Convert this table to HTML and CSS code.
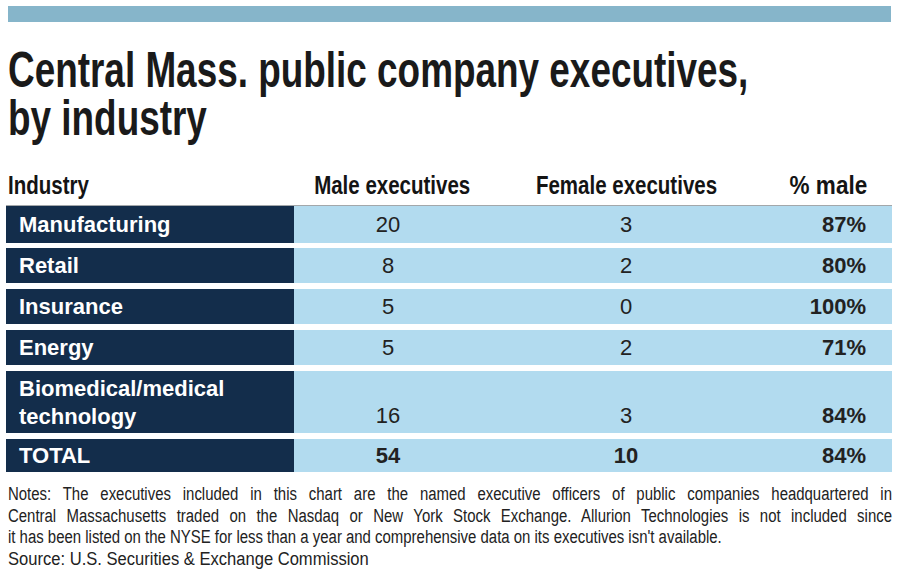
FILE: index.html
```html
<!DOCTYPE html>
<html lang="en">
<head>
<meta charset="utf-8">
<title>Central Mass. public company executives, by industry</title>
<link rel="stylesheet" href="styles.css">
</head>
<body>
<div class="page">
  <div class="topbar"></div>
  <h1 class="title">
    <span class="tline">Central Mass. public company executives,</span>
    <span class="tline">by industry</span>
  </h1>
  <div class="table">
    <div class="head">
      <div class="h-name"><span class="cond">Industry</span></div>
      <div class="h-num"><span class="cond">Male executives</span></div>
      <div class="h-num"><span class="cond">Female executives</span></div>
      <div class="h-pct"><span class="cond">% male</span></div>
    </div>
    <div class="rows">
      <div class="row">
        <div class="name">Manufacturing</div>
        <div class="num">20</div>
        <div class="num">3</div>
        <div class="pct">87%</div>
      </div>
      <div class="row">
        <div class="name">Retail</div>
        <div class="num">8</div>
        <div class="num">2</div>
        <div class="pct">80%</div>
      </div>
      <div class="row">
        <div class="name">Insurance</div>
        <div class="num">5</div>
        <div class="num">0</div>
        <div class="pct">100%</div>
      </div>
      <div class="row">
        <div class="name">Energy</div>
        <div class="num">5</div>
        <div class="num">2</div>
        <div class="pct">71%</div>
      </div>
      <div class="row tall">
        <div class="name">Biomedical/medical<br>technology</div>
        <div class="num">16</div>
        <div class="num">3</div>
        <div class="pct">84%</div>
      </div>
      <div class="row total">
        <div class="name">TOTAL</div>
        <div class="num">54</div>
        <div class="num">10</div>
        <div class="pct">84%</div>
      </div>
    </div>
  </div>
  <div class="notes">
    <p class="line just">Notes: The executives included in this chart are the named executive officers of public companies headquartered in</p>
    <p class="line just">Central Massachusetts traded on the Nasdaq or New York Stock Exchange. Allurion Technologies is not included since</p>
    <p class="line">it has been listed on the NYSE for less than a year and comprehensive data on its executives isn't available.</p>
    <p class="line source">Source: U.S. Securities &amp; Exchange Commission</p>
  </div>
</div>
</body>
</html>
```

FILE: styles.css
```css
* { box-sizing: border-box; }
html, body { margin: 0; padding: 0; background: #ffffff; }
body { font-family: "Liberation Sans", Arial, sans-serif; color: #1b1b1b; }

.page {
  width: 900px;
  height: 573px;
  padding: 6px 8px 0 6px;
  overflow: hidden;
}

.topbar {
  height: 16px;
  margin: 0 1px 0 2px;
  background: #86b5ca;
}

.title {
  margin: 24px 0 0 2px;
  font-family: "Liberation Sans", Arial, sans-serif;
  font-weight: 700;
  font-size: 50px;
  line-height: 48px;
  color: #1a1a1a;
}
.tline {
  display: block;
  white-space: nowrap;
  transform: scaleX(0.738);
  transform-origin: left center;
}

.table { margin-top: 28px; }

.head {
  display: grid;
  grid-template-columns: 288px 196px 272px 1fr;
  height: 36px;
  border-bottom: 1px solid #a3a7aa;
  font-weight: 700;
  font-size: 25px;
  line-height: 30px;
  color: #141414;
}
.head > div { display: flex; }
.cond {
  display: inline-block;
  white-space: nowrap;
  transform: scaleX(0.82);
}
.h-name { padding-left: 2px; justify-content: flex-start; }
.h-name .cond { transform-origin: left center; }
.h-num { justify-content: center; }
.h-pct { justify-content: flex-end; padding-right: 25px; }
.h-pct .cond { transform-origin: right center; transform: scaleX(0.9); }

.rows {
  display: flex;
  flex-direction: column;
  gap: 6px;
}

.row {
  display: grid;
  grid-template-columns: 288px 196px 272px 1fr;
  background: #b2dbef;
  font-size: 22px;
  line-height: 35px;
  color: #222222;
}
.row:first-child { line-height: 37px; margin-bottom: -1px; }

.name {
  background: #132d4b;
  color: #ffffff;
  font-weight: 700;
  padding-left: 13px;
}
.num { text-align: center; }
.num:nth-child(2) { padding-right: 8px; }
.pct { text-align: right; padding-right: 26px; font-weight: 700; }

.row.tall { line-height: 28px; }
.row.tall .name { padding: 4px 0 2px 13px; }
.row.tall .num,
.row.tall .pct { align-self: end; padding-bottom: 3px; }

.row.total { line-height: 33px; }
.row.total .num { font-weight: 700; }

.notes {
  margin-top: 12px;
  padding-left: 2px;
  font-size: 18px;
  line-height: 21.7px;
  color: #222222;
}
.line {
  margin: 0;
  width: calc(100% / 0.83);
  white-space: nowrap;
  transform: scaleX(0.83);
  transform-origin: left center;
}
.line.just { text-align: justify; text-align-last: justify; }
.line.source { width: calc(100% / 0.92); transform: scaleX(0.92); }
```
